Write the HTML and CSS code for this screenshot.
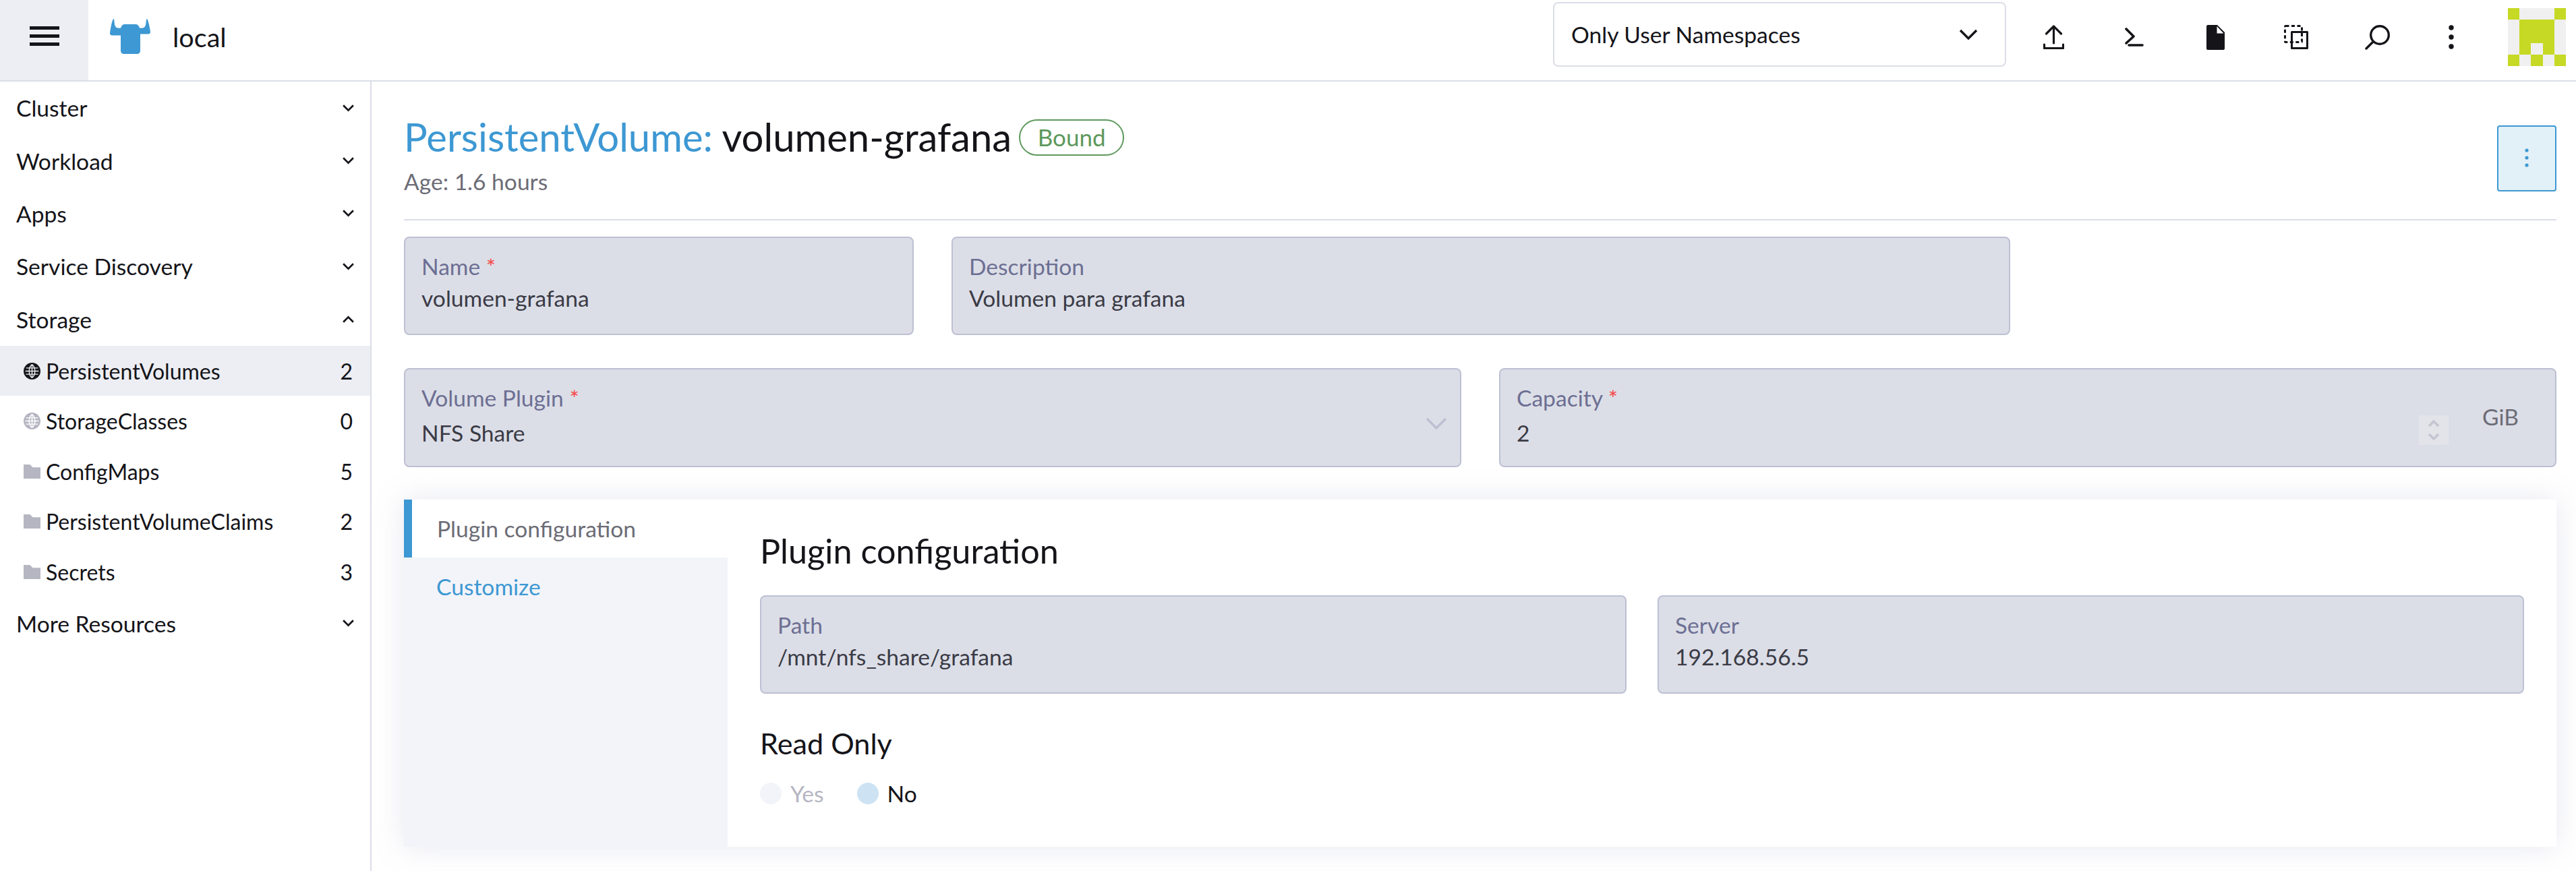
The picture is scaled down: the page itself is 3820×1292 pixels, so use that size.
FILE: index.html
```html
<!DOCTYPE html>
<html lang="en">

<head>
    <meta charset="UTF-8">
    <title>PersistentVolume: volumen-grafana</title>
    <link rel="stylesheet" href="styles.css">
</head>

<body>
    <header class="topbar">
        <button class="menu-button" aria-label="Menu">
            <svg width="44" height="29" viewBox="0 0 44 29"><path d="M0 0h44v5H0zM0 12h44v5H0zM0 24h44v5H0z" fill="#141419"/></svg>
        </button>
        <div class="cluster">
            <svg class="cluster-logo" width="60" height="52" viewBox="0 0 60 52"><path d="M5 0c1.500 0 1.500 3 1.700 6 .3 4 1.800 7 5 7.500 1.500.2 3 .2 4.500.1C17 10 19 8 22 8h16c3 0 5 2 6 5.600 1.500.1 3 .1 4.500-.1 3.200-.5 4.700-3.500 5-7.500.2-3 .2-6 1.700-6 1.800 3 3.800 12 4.800 19 .2 2-1 3.500-3 3.500H45V47c0 3-2 5-5 5H21c-3 0-5-2-5-5V24.500H3c-2 0-3.200-1.500-3-3.500C1 13 3 3 5 0z" fill="#3d98d3"/></svg>
            <span class="cluster-name">local</span>
        </div>
        <div class="ns-select">
            <span>Only User Namespaces</span>
            <svg width="28" height="16" viewBox="0 0 28 16"><path d="M2 2l12 12L26 2" fill="none" stroke="#141419" stroke-width="3.4"/></svg>
        </div>
        <div class="tools">
            <button class="tool"><svg width="31" height="36" viewBox="0 0 31 36"><path d="M15.500 27V2M4.500 13l11-11 11 11M1.500 29v5.500h28V29" fill="none" stroke="#141419" stroke-width="3.200" stroke-linecap="round" stroke-linejoin="round"/></svg></button>
            <button class="tool"><svg width="28" height="28" viewBox="0 0 28 28"><path d="M2 2l11 11L2 23" fill="none" stroke="#141419" stroke-width="3.600" stroke-linecap="round" stroke-linejoin="round"/><path d="M6 26h20" stroke="#141419" stroke-width="3.600" stroke-linecap="round"/></svg></button>
            <button class="tool"><svg width="27" height="37" viewBox="0 0 27 37"><path d="M0 2c0-1 1-2 2-2h14l11 11v24c0 1-1 2-2 2H2c-1 0-2-1-2-2z" fill="#141419"/><path d="M15.500 2l10 10.500h-10z" fill="#fff"/></svg></button>
            <button class="tool"><svg width="36" height="36" viewBox="0 0 36 36"><rect x="1.500" y="1.500" width="25" height="24" rx="1" fill="none" stroke="#141419" stroke-width="3" stroke-dasharray="5 3.500"/><path d="M11.500 25V10.500h23v24h-23z" fill="none" stroke="#141419" stroke-width="3" stroke-linejoin="round"/></svg></button>
            <button class="tool"><svg width="37" height="37" viewBox="0 0 37 37"><circle cx="22" cy="15" r="13.300" fill="none" stroke="#141419" stroke-width="3.400"/><path d="M11 26L2 35" stroke="#141419" stroke-width="3.400" stroke-linecap="round"/></svg></button>
            <button class="tool tool-dots"><svg width="8" height="36" viewBox="0 0 8 36"><circle cx="4" cy="4" r="3.700" fill="#141419"/><circle cx="4" cy="18" r="3.700" fill="#141419"/><circle cx="4" cy="32" r="3.700" fill="#141419"/></svg></button>
        </div>
        <svg class="avatar" width="86" height="86" viewBox="0 0 5 5" shape-rendering="crispEdges">
            <rect width="5" height="5" fill="#f0f0f0"/>
            <path d="M0 0h1v1H0zM4 0h1v1H4zM1 1h3v2H1zM1 3h1v1H1zM3 3h1v1H3zM0 4h1v1H0zM2 4h1v1H2zM4 4h1v1H4z" fill="#c6d925"/>
        </svg>
    </header>

    <div class="layout">
        <nav class="sidebar">
            <div class="group"><span>Cluster</span><svg class="chev" viewBox="0 0 18 12"><path d="M2 2l7 7 7-7"/></svg></div>
            <div class="group"><span>Workload</span><svg class="chev" viewBox="0 0 18 12"><path d="M2 2l7 7 7-7"/></svg></div>
            <div class="group"><span>Apps</span><svg class="chev" viewBox="0 0 18 12"><path d="M2 2l7 7 7-7"/></svg></div>
            <div class="group"><span>Service Discovery</span><svg class="chev" viewBox="0 0 18 12"><path d="M2 2l7 7 7-7"/></svg></div>
            <div class="group"><span>Storage</span><svg class="chev" viewBox="0 0 18 12"><path d="M2 10l7-7 7 7"/></svg></div>
            <a class="item active">
                <svg class="globe" viewBox="0 0 24 24"><circle cx="12" cy="12" r="12"/><path d="M12 2.500v19M2.500 12h19M3.500 7.500h17M3.500 16.500h17M12 2.500c-5.500 4-5.500 15 0 19M12 2.500c5.500 4 5.500 15 0 19"/></svg>
                <span class="item-label">PersistentVolumes</span><span>2</span>
            </a>
            <a class="item">
                <svg class="globe muted" viewBox="0 0 24 24"><circle cx="12" cy="12" r="12"/><path d="M12 2.500v19M2.500 12h19M3.500 7.500h17M3.500 16.500h17M12 2.500c-5.500 4-5.500 15 0 19M12 2.500c5.500 4 5.500 15 0 19"/></svg>
                <span class="item-label">StorageClasses</span><span>0</span>
            </a>
            <a class="item">
                <svg class="folder" viewBox="0 0 24 20"><path d="M0 0h9l4 4h11v16H0z"/></svg>
                <span class="item-label">ConfigMaps</span><span>5</span>
            </a>
            <a class="item">
                <svg class="folder" viewBox="0 0 24 20"><path d="M0 0h9l4 4h11v16H0z"/></svg>
                <span class="item-label">PersistentVolumeClaims</span><span>2</span>
            </a>
            <a class="item">
                <svg class="folder" viewBox="0 0 24 20"><path d="M0 0h9l4 4h11v16H0z"/></svg>
                <span class="item-label">Secrets</span><span>3</span>
            </a>
            <div class="group"><span>More Resources</span><svg class="chev" viewBox="0 0 18 12"><path d="M2 2l7 7 7-7"/></svg></div>
        </nav>

        <main class="content">
            <div class="page-head">
                <div>
                    <h1 class="title"><span class="title-type">PersistentVolume:</span> volumen-grafana<span class="badge">Bound</span></h1>
                    <div class="age">Age: 1.6 hours</div>
                </div>
                <button class="actions">
                    <svg width="8" height="28" viewBox="0 0 8 28"><circle cx="4" cy="3" r="2.600"/><circle cx="4" cy="14" r="2.600"/><circle cx="4" cy="25" r="2.600"/></svg>
                </button>
            </div>

            <div class="row row-name">
                <div class="field"><label>Name <em>*</em></label><div class="value">volumen-grafana</div></div>
                <div class="field"><label>Description</label><div class="value">Volumen para grafana</div></div>
            </div>

            <div class="row row-plugin">
                <div class="field field-tall">
                    <label>Volume Plugin <em>*</em></label>
                    <div class="value">NFS Share</div>
                    <svg class="select-arrow" viewBox="0 0 34 20"><path d="M3 3l14 14L31 3"/></svg>
                </div>
                <div class="field field-tall">
                    <label>Capacity <em>*</em></label>
                    <div class="value">2</div>
                    <div class="spinner"><svg width="18" height="32" viewBox="0 0 18 32"><path d="M2 10l7-7 7 7M2 22l7 7 7-7"/></svg></div>
                    <span class="unit">GiB</span>
                </div>
            </div>

            <section class="panel">
                <div class="tabs">
                    <div class="tab tab-active">Plugin configuration</div>
                    <div class="tab">Customize</div>
                </div>
                <div class="tab-body">
                    <h2 class="section-title">Plugin configuration</h2>
                    <div class="row row-path">
                        <div class="field"><label>Path</label><div class="value">/mnt/nfs_share/grafana</div></div>
                        <div class="field"><label>Server</label><div class="value">192.168.56.5</div></div>
                    </div>
                    <h3 class="radio-title">Read Only</h3>
                    <div class="radios">
                        <div class="radio radio-off"><i></i>Yes</div>
                        <div class="radio radio-on"><i></i>No</div>
                    </div>
                </div>
            </section>
        </main>
    </div>
</body>

</html>
```

FILE: styles.css
```css
* {
    box-sizing: border-box;
}

body {
    margin: 0;
    height: 1292px;
    overflow: hidden;
    background: #fff;
    color: #141419;
    font-family: Lato, "Open Sans", sans-serif;
    font-size: 33.6px;
}

button {
    border: 0;
    background: none;
    padding: 0;
    font: inherit;
}

/* top bar */
.topbar {
    display: flex;
    align-items: center;
    height: 121px;
    border-bottom: 2px solid #dcdee7;
}

.menu-button {
    width: 131px;
    height: 119px;
    padding-bottom: 12px;
    background: #edeef3;
    display: flex;
    align-items: center;
    justify-content: center;
}

.cluster {
    display: flex;
    align-items: center;
    flex: 1;
    margin-top: -11px;
    padding-left: 32px;
}

.cluster-name {
    margin-left: 33px;
    font-size: 39.6px;
}

.ns-select {
    width: 672px;
    height: 96px;
    margin-top: -17px;
    padding: 0 40px 0 25px;
    display: flex;
    align-items: center;
    justify-content: space-between;
    border: 2px solid #dcdee7;
    border-radius: 8px;
}

.tools {
    display: flex;
    margin-left: 10px;
    margin-top: -9px;
}

.tool {
    width: 120px;
    height: 96px;
    display: flex;
    align-items: center;
    justify-content: center;
}

.tool-dots {
    width: 100px;
}

.avatar {
    margin-left: 34px;
    margin-right: 15px;
    margin-top: -9px;
}

/* sidebar */
.layout {
    display: flex;
    height: 1171px;
}

.sidebar {
    width: 551px;
    flex: none;
    border-right: 2px solid #dcdee7;
}

.group {
    height: 78.4px;
    padding: 0 23px 0 24px;
    display: flex;
    align-items: center;
    justify-content: space-between;
}

.chev {
    width: 19px;
    height: 13px;
    fill: none;
    stroke: #141419;
    stroke-width: 2.6;
}

.item {
    height: 74.5px;
    padding: 0 26px 0 35px;
    display: flex;
    align-items: center;
    font-size: 32px;
}

.item.active {
    background: #edeef3;
}

.item-label {
    flex: 1;
    margin-left: 8px;
}

.globe {
    width: 25px;
    height: 25px;
    fill: none;
}

.globe circle {
    fill: #141419;
}

.globe path {
    stroke: #edeef3;
    stroke-width: 1.3;
}

.globe.muted circle {
    fill: #b6b6c2;
}

.globe.muted path {
    stroke: #fff;
}

.folder {
    width: 25px;
    height: 21px;
    fill: #b6b6c2;
}

/* main */
.content {
    flex: 1;
    padding: 0 29px 0 48px;
}

.page-head {
    height: 206px;
    margin-bottom: 24px;
    display: flex;
    justify-content: space-between;
    border-bottom: 2px solid #dcdee7;
}

.title {
    margin: 48px 0 0;
    font-size: 58px;
    font-weight: 400;
    line-height: 68px;
    display: flex;
    align-items: center;
    white-space: pre;
}

.title-type {
    color: #3d98d3;
}

.badge {
    margin-left: 11px;
    margin-top: 2px;
    width: 156px;
    height: 54px;
    border: 2px solid #5d995d;
    border-radius: 27px;
    color: #5d995d;
    font-size: 35px;
    line-height: 48px;
    text-align: center;
}

.age {
    margin-top: 12px;
    color: #6c6c76;
}

.actions {
    width: 88px;
    height: 98px;
    margin-top: 65px;
    background: #e2f0f7;
    border: 2px solid #3d98d3;
    border-radius: 4px;
    fill: #3d98d3;
}

.row {
    display: flex;
}

.row-name {
    gap: 56px;
    margin-bottom: 49px;
}

.row-name .field:first-child {
    width: 756px;
}

.row-name .field:last-child {
    width: 1570px;
}

.row-plugin {
    gap: 56px;
    margin-bottom: 48px;
}

.row-plugin .field {
    flex: 1;
}

.field {
    position: relative;
    height: 146px;
    padding: 22px 24px 0;
    background: #dcdee7;
    border: 2px solid #bdc0d3;
    border-radius: 8px;
}

.field-tall {
    height: 147px;
}

.field label {
    display: block;
    color: #6c6f93;
    line-height: 40px;
}

.field em {
    color: #f64747;
    font-style: normal;
}

.value {
    margin-top: 7px;
    color: #3a3b46;
    line-height: 40px;
}

.field-tall .value {
    margin-top: 12px;
}

.select-arrow {
    position: absolute;
    right: 18px;
    top: 70px;
    width: 34px;
    height: 20px;
    fill: none;
    stroke: #bdc0d3;
    stroke-width: 3.6;
}

.spinner {
    position: absolute;
    right: 158px;
    top: 68px;
    width: 44px;
    height: 44px;
    background: #e3e4ea;
    display: flex;
    align-items: center;
    justify-content: center;
}

.spinner path {
    fill: none;
    stroke: #c4c5d0;
    stroke-width: 3.6;
}

.unit {
    position: absolute;
    right: 54px;
    top: 50px;
    color: #6c6c76;
}

/* tabbed panel */
.panel {
    display: flex;
    height: 515px;
    box-shadow: 0 0 40px rgba(160, 165, 195, 0.25);
}

.tabs {
    width: 480px;
    background: #f3f4f9;
}

.tab {
    height: 86px;
    padding-left: 48px;
    display: flex;
    align-items: center;
    color: #3d98d3;
}

.tab-active {
    background: #fff;
    color: #6c6c76;
    border-left: 12px solid #3d98d3;
    padding-left: 37px;
}

.tab-body {
    flex: 1;
    padding: 46px 48px 0 48px;
    background: #fff;
}

.section-title {
    margin: 0 0 36px;
    font-size: 50.4px;
    font-weight: 400;
    line-height: 60px;
}

.row-path {
    gap: 46px;
}

.row-path .field {
    flex: 1;
}

.radio-title {
    margin: 48px 0 30px;
    font-size: 43.2px;
    font-weight: 400;
    line-height: 50px;
}

.radios {
    display: flex;
    gap: 49px;
}

.radio {
    display: flex;
    align-items: center;
    gap: 13px;
    line-height: 40px;
}

.radio i {
    width: 32px;
    height: 32px;
    border-radius: 50%;
}

.radio-off {
    color: #b6b6c2;
}

.radio-off i {
    background: #f3f4f9;
}

.radio-on i {
    background: #cde3f3;
}
```
